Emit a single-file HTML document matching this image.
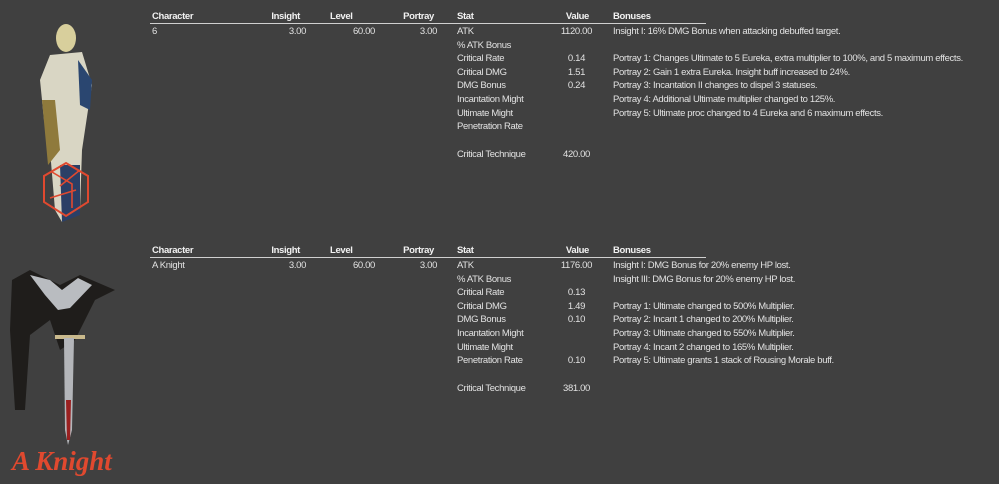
<!DOCTYPE html>
<html><head><meta charset="utf-8"><style>
body{margin:0;width:999px;height:484px;background:#404040;overflow:hidden;position:relative;font-family:"Liberation Sans",sans-serif;font-size:9.5px;letter-spacing:-0.35px;color:#e2e2e2}
.t{position:absolute;white-space:nowrap;line-height:11px;margin-top:1px}
.h{font-weight:bold;color:#f2f2f2}
.r{text-align:right}
.ln{position:absolute;height:1px;background:#d0d0d0}
</style></head><body>

<svg style="position:absolute;left:0;top:0" width="140" height="240">
<ellipse cx="66" cy="38" rx="10" ry="14" fill="#d8cf9c"/>
<path d="M50 55 L82 52 L92 85 L88 110 L82 150 L80 210 L62 222 L55 210 L50 150 L44 120 L40 80 Z" fill="#d9d6c4"/>
<path d="M78 60 L92 80 L90 110 L80 105 Z" fill="#2a4670"/>
<path d="M42 100 L55 100 L60 150 L48 165 Z" fill="#8f7a3c"/>
<path d="M60 165 L80 165 L80 215 L62 222 Z" fill="#2b3f66"/>
<polygon points="66,163 88,176 88,202 66,216 44,202 44,176" fill="none" stroke="#e0492f" stroke-width="2"/>
<path d="M52 172 L72 184 L72 208 M80 170 L60 186 M50 198 L76 190" stroke="#e0492f" stroke-width="1.6" fill="none"/>
</svg>

<svg style="position:absolute;left:0;top:240" width="140" height="244">
<path d="M12 40 L30 30 L60 45 L80 35 L115 50 L95 60 L75 100 L60 110 L50 80 L30 95 L25 170 L15 170 L10 90 Z" fill="#1f1d1b"/>
<path d="M30 35 L50 40 L62 50 L78 38 L92 45 L70 68 L58 70 L45 55 Z" fill="#b9bcc0"/>
<rect x="55" y="95" width="30" height="4" fill="#c9b98c"/>
<path d="M64 98 L74 98 L72 190 L68 205 L65 190 Z" fill="#b4b6ba"/>
<path d="M66 160 L71 160 L70 200 L67 200 Z" fill="#9a2020"/>
<text x="12" y="230" font-family="Liberation Serif,serif" font-size="27" font-weight="bold" font-style="italic" fill="#e0492f" letter-spacing="0">A Knight</text>
</svg>

<div class="t h" style="left:152px;top:10px">Character</div>
<div class="t h r" style="left:250px;top:10px;width:50px">Insight</div>
<div class="t h" style="left:330px;top:10px">Level</div>
<div class="t h r" style="left:384px;top:10px;width:50px">Portray</div>
<div class="t h" style="left:457px;top:10px">Stat</div>
<div class="t h r" style="left:540px;top:10px;width:49px">Value</div>
<div class="t h" style="left:613px;top:10px">Bonuses</div>
<div class="ln" style="left:150px;top:23px;width:556px"></div>

<div class="t" style="left:152px;top:25px">6</div>
<div class="t r" style="left:256px;top:25px;width:50px">3.00</div>
<div class="t r" style="left:325px;top:25px;width:50px">60.00</div>
<div class="t r" style="left:387px;top:25px;width:50px">3.00</div>
<div class="t" style="left:457px;top:25px">ATK</div>
<div class="t" style="left:457px;top:39px">% ATK Bonus</div>
<div class="t" style="left:457px;top:52px">Critical Rate</div>
<div class="t" style="left:457px;top:66px">Critical DMG</div>
<div class="t" style="left:457px;top:79px">DMG Bonus</div>
<div class="t" style="left:457px;top:93px">Incantation Might</div>
<div class="t" style="left:457px;top:107px">Ultimate Might</div>
<div class="t" style="left:457px;top:120px">Penetration Rate</div>
<div class="t" style="left:457px;top:148px">Critical Technique</div>
<div class="t r" style="left:540px;top:25px;width:52px">1120.00</div>
<div class="t r" style="left:540px;top:52px;width:45px">0.14</div>
<div class="t r" style="left:540px;top:66px;width:45px">1.51</div>
<div class="t r" style="left:540px;top:79px;width:45px">0.24</div>
<div class="t r" style="left:540px;top:148px;width:50px">420.00</div>
<div class="t" style="left:613px;top:25px">Insight I: 16% DMG Bonus when attacking debuffed target.</div>
<div class="t" style="left:613px;top:52px">Portray 1: Changes Ultimate to 5 Eureka, extra multiplier to 100%, and 5 maximum effects.</div>
<div class="t" style="left:613px;top:66px">Portray 2: Gain 1 extra Eureka. Insight buff increased to 24%.</div>
<div class="t" style="left:613px;top:79px">Portray 3: Incantation II changes to dispel 3 statuses.</div>
<div class="t" style="left:613px;top:93px">Portray 4: Additional Ultimate multiplier changed to 125%.</div>
<div class="t" style="left:613px;top:107px">Portray 5: Ultimate proc changed to 4 Eureka and 6 maximum effects.</div>

<div class="t h" style="left:152px;top:244px">Character</div>
<div class="t h r" style="left:250px;top:244px;width:50px">Insight</div>
<div class="t h" style="left:330px;top:244px">Level</div>
<div class="t h r" style="left:384px;top:244px;width:50px">Portray</div>
<div class="t h" style="left:457px;top:244px">Stat</div>
<div class="t h r" style="left:540px;top:244px;width:49px">Value</div>
<div class="t h" style="left:613px;top:244px">Bonuses</div>
<div class="ln" style="left:150px;top:257px;width:556px"></div>

<div class="t" style="left:152px;top:259px">A Knight</div>
<div class="t r" style="left:256px;top:259px;width:50px">3.00</div>
<div class="t r" style="left:325px;top:259px;width:50px">60.00</div>
<div class="t r" style="left:387px;top:259px;width:50px">3.00</div>
<div class="t" style="left:457px;top:259px">ATK</div>
<div class="t" style="left:457px;top:273px">% ATK Bonus</div>
<div class="t" style="left:457px;top:286px">Critical Rate</div>
<div class="t" style="left:457px;top:300px">Critical DMG</div>
<div class="t" style="left:457px;top:313px">DMG Bonus</div>
<div class="t" style="left:457px;top:327px">Incantation Might</div>
<div class="t" style="left:457px;top:341px">Ultimate Might</div>
<div class="t" style="left:457px;top:354px">Penetration Rate</div>
<div class="t" style="left:457px;top:382px">Critical Technique</div>
<div class="t r" style="left:540px;top:259px;width:52px">1176.00</div>
<div class="t r" style="left:540px;top:286px;width:45px">0.13</div>
<div class="t r" style="left:540px;top:300px;width:45px">1.49</div>
<div class="t r" style="left:540px;top:313px;width:45px">0.10</div>
<div class="t r" style="left:540px;top:354px;width:45px">0.10</div>
<div class="t r" style="left:540px;top:382px;width:50px">381.00</div>
<div class="t" style="left:613px;top:259px">Insight I: DMG Bonus for 20% enemy HP lost.</div>
<div class="t" style="left:613px;top:273px">Insight III: DMG Bonus for 20% enemy HP lost.</div>
<div class="t" style="left:613px;top:300px">Portray 1: Ultimate changed to 500% Multiplier.</div>
<div class="t" style="left:613px;top:313px">Portray 2: Incant 1 changed to 200% Multiplier.</div>
<div class="t" style="left:613px;top:327px">Portray 3: Ultimate changed to 550% Multiplier.</div>
<div class="t" style="left:613px;top:341px">Portray 4: Incant 2 changed to 165% Multiplier.</div>
<div class="t" style="left:613px;top:354px">Portray 5: Ultimate grants 1 stack of Rousing Morale buff.</div>
</body></html>
